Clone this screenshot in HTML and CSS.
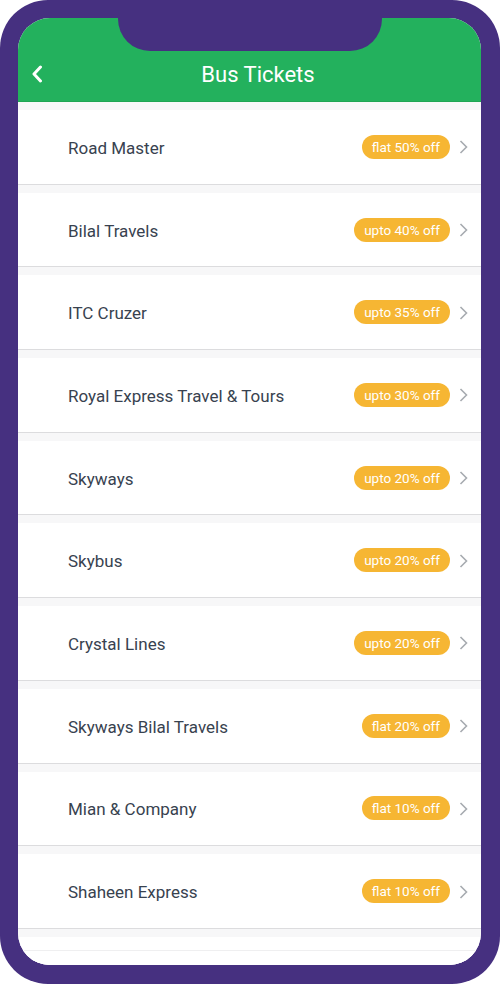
FILE: index.html
```html
<!DOCTYPE html>
<html>
<head>
<meta charset="utf-8">
<link rel="stylesheet" href="styles.css">
</head>
<body>
<div class="phone">
  <div class="screen">
    <div class="notch"></div>
    <header class="header">
      <svg class="back" width="12" height="18" viewBox="0 0 12 18"><path d="M9.5 2 L3 9 L9.5 16" fill="none" stroke="#fff" stroke-width="3" stroke-linecap="round" stroke-linejoin="round"/></svg>
      <h1 class="title">Bus Tickets</h1>
    </header>
    <ul class="list">
      <li class="item"><div class="row"><span class="name">Road Master</span><span class="badge">flat 50% off</span><svg class="chev" width="9" height="14" viewBox="0 0 9 14"><path d="M1.5 1 L7.5 7 L1.5 13" fill="none" stroke="#a7abb0" stroke-width="1.6"/></svg></div></li>
      <li class="item"><div class="row"><span class="name">Bilal Travels</span><span class="badge">upto 40% off</span><svg class="chev" width="9" height="14" viewBox="0 0 9 14"><path d="M1.5 1 L7.5 7 L1.5 13" fill="none" stroke="#a7abb0" stroke-width="1.6"/></svg></div></li>
      <li class="item"><div class="row"><span class="name">ITC Cruzer</span><span class="badge">upto 35% off</span><svg class="chev" width="9" height="14" viewBox="0 0 9 14"><path d="M1.5 1 L7.5 7 L1.5 13" fill="none" stroke="#a7abb0" stroke-width="1.6"/></svg></div></li>
      <li class="item"><div class="row"><span class="name">Royal Express Travel &amp; Tours</span><span class="badge">upto 30% off</span><svg class="chev" width="9" height="14" viewBox="0 0 9 14"><path d="M1.5 1 L7.5 7 L1.5 13" fill="none" stroke="#a7abb0" stroke-width="1.6"/></svg></div></li>
      <li class="item"><div class="row"><span class="name">Skyways</span><span class="badge">upto 20% off</span><svg class="chev" width="9" height="14" viewBox="0 0 9 14"><path d="M1.5 1 L7.5 7 L1.5 13" fill="none" stroke="#a7abb0" stroke-width="1.6"/></svg></div></li>
      <li class="item"><div class="row"><span class="name">Skybus</span><span class="badge">upto 20% off</span><svg class="chev" width="9" height="14" viewBox="0 0 9 14"><path d="M1.5 1 L7.5 7 L1.5 13" fill="none" stroke="#a7abb0" stroke-width="1.6"/></svg></div></li>
      <li class="item"><div class="row"><span class="name">Crystal Lines</span><span class="badge">upto 20% off</span><svg class="chev" width="9" height="14" viewBox="0 0 9 14"><path d="M1.5 1 L7.5 7 L1.5 13" fill="none" stroke="#a7abb0" stroke-width="1.6"/></svg></div></li>
      <li class="item"><div class="row"><span class="name">Skyways Bilal Travels</span><span class="badge">flat 20% off</span><svg class="chev" width="9" height="14" viewBox="0 0 9 14"><path d="M1.5 1 L7.5 7 L1.5 13" fill="none" stroke="#a7abb0" stroke-width="1.6"/></svg></div></li>
      <li class="item"><div class="row"><span class="name">Mian &amp; Company</span><span class="badge">flat 10% off</span><svg class="chev" width="9" height="14" viewBox="0 0 9 14"><path d="M1.5 1 L7.5 7 L1.5 13" fill="none" stroke="#a7abb0" stroke-width="1.6"/></svg></div></li>
      <li class="item"><div class="row"><span class="name">Shaheen Express</span><span class="badge">flat 10% off</span><svg class="chev" width="9" height="14" viewBox="0 0 9 14"><path d="M1.5 1 L7.5 7 L1.5 13" fill="none" stroke="#a7abb0" stroke-width="1.6"/></svg></div></li>
      <li class="item item-last"><div class="row"></div></li>
    </ul>
  </div>
</div>
</body>
</html>
```
FILE: styles.css
```css
* { box-sizing: border-box; }
html, body { margin: 0; padding: 0; background: #ffffff; }
body { font-family: Roboto, "Liberation Sans", Arial, sans-serif; }

.phone {
  width: 500px;
  height: 984px;
  background: #463080;
  border-radius: 48px;
  padding: 18px 19px 19px 18px;
}

.screen {
  position: relative;
  width: 463px;
  height: 947px;
  background: #ffffff;
  border-radius: 32px;
  overflow: hidden;
}

.notch {
  position: absolute;
  top: 0;
  left: 100px;
  width: 264px;
  height: 33px;
  background: #463080;
  border-radius: 0 0 32px 32px;
}

.header {
  height: 84px;
  background: #23b15d;
  border-bottom: 1px solid #1fa553;
  display: flex;
  align-items: center;
  padding-top: 43px;
  padding-bottom: 12px;
}

.back {
  display: block;
  margin-left: 13px;
  margin-top: -2px;
  flex: none;
}

.title {
  flex: 1;
  margin: 0 8px 0 0;
  text-align: center;
  color: #ffffff;
  font-size: 22px;
  font-weight: 400;
  line-height: 28px;
}

.list {
  list-style: none;
  margin: 0;
  padding: 0;
}

.item {
  background: #f7f7f8;
  padding-top: 8px;
}

.row {
  height: 74.7px;
  background: #ffffff;
  border-bottom: 1px solid #dcdcde;
  display: flex;
  align-items: center;
  padding: 2px 13px 0 50px;
}

.item-last {
  background: linear-gradient(#f7f7f8 8px, #ffffff 8px);
  padding-top: 21px;
}

.item-last .row {
  border-top: 1px solid #efeff0;
  border-bottom: none;
}

.name {
  flex: 1;
  font-size: 17px;
  color: #38424f;
}

.badge {
  background: #f6b633;
  color: #ffffff;
  font-size: 13.5px;
  line-height: 24px;
  height: 24px;
  padding: 0 10px;
  border-radius: 12px;
  margin-top: -2px;
}

.chev {
  display: block;
  margin-left: 9px;
  margin-top: -1px;
  flex: none;
}
```
